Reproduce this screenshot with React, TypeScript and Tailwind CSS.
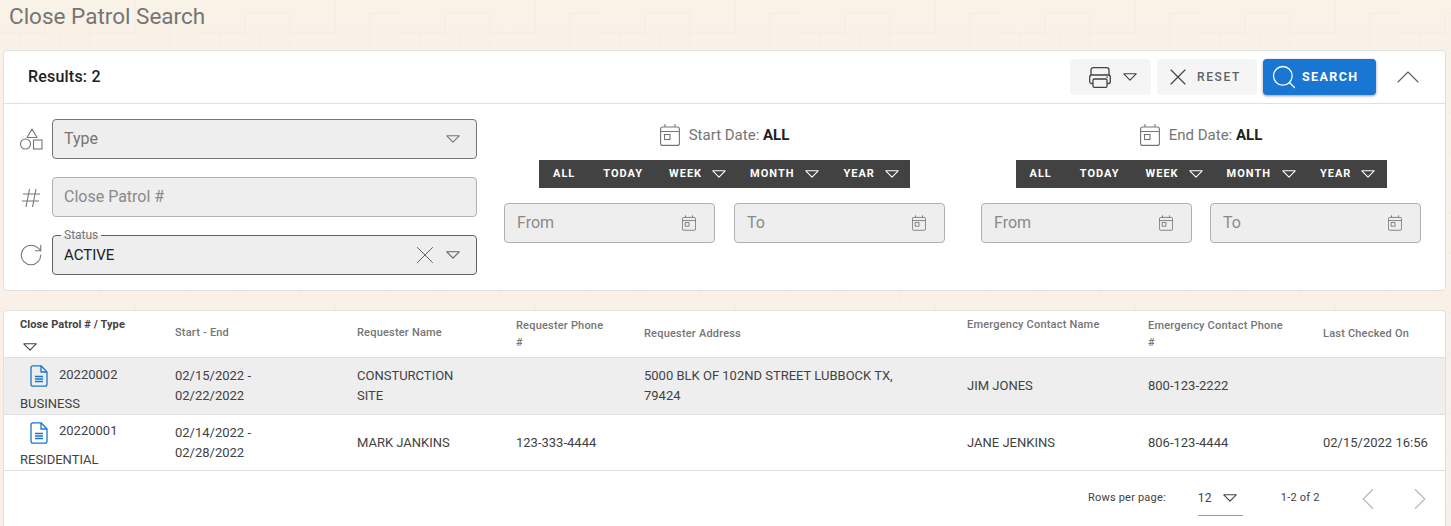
import { X, Search, ChevronUp, ChevronLeft, ChevronRight, RotateCw } from 'lucide-react';

function Caret({ className = '' }: { className?: string }) {
    return (
        <svg width="14" height="8" viewBox="0 0 14 8" fill="none" className={className}>
            <path d="M0.8 0.8H13.2L7 7.2Z" stroke="currentColor" strokeWidth="1.1" strokeLinejoin="round" />
        </svg>
    );
}

function PrinterIcon() {
    return (
        <svg width="22" height="21" viewBox="0 0 22 21" fill="none" stroke="currentColor" strokeWidth="1.3">
            <path d="M2 8V3C2 1.6 3 0.7 4.4 0.7H17.6C19 0.7 20 1.6 20 3V8" />
            <path d="M4 16.5H2.6C1.4 16.5 0.7 15.6 0.7 14.5V10C0.7 8.8 1.6 8 2.8 8H19.2C20.4 8 21.3 8.8 21.3 10V14.5C21.3 15.6 20.6 16.5 19.4 16.5H18" />
            <rect x="4" y="12" width="14" height="8.3" rx="1.2" />
            <path d="M17.5 10.2H19" />
        </svg>
    );
}

function CalendarIcon({ width = 20, height = 22 }: { width?: number; height?: number }) {
    return (
        <svg width={width} height={height} viewBox="0 0 20 22" fill="none" stroke="currentColor" strokeWidth="1.1">
            <rect x="0.6" y="3" width="18.8" height="18.4" rx="2" />
            <path d="M0.6 7.5H19.4M5 0V3M15 0V3" />
            <rect x="4.5" y="10.5" width="5.5" height="5" />
        </svg>
    );
}

function DocIcon() {
    return (
        <svg width="18" height="22" viewBox="0 0 18 22" fill="none" stroke="#1976d2" strokeWidth="1.3" className="shrink-0">
            <path d="M3 0.8H11L17 7V19C17 20.2 16 21.2 14.8 21.2H3.2C2 21.2 1 20.2 1 19V3C1 1.8 1.8 0.8 3 0.8Z" strokeLinejoin="round" />
            <path d="M11 0.8V7H17M5 11.5H13M5 14H13M5 16.5H13" />
        </svg>
    );
}

function ShapesIcon() {
    return (
        <svg width="26" height="26" viewBox="0 0 26 26" fill="none" stroke="currentColor" strokeWidth="1.1" className="shrink-0">
            <path d="M14 3L19 11.5H9Z" strokeLinejoin="round" />
            <circle cx="7.5" cy="18" r="5" />
            <rect x="15.5" y="14" width="8.5" height="9" />
        </svg>
    );
}

function HashIcon() {
    return (
        <svg width="26" height="26" viewBox="0 0 26 26" fill="none" stroke="currentColor" strokeWidth="1.1" className="shrink-0">
            <path d="M11.5 5L8 23M18 5L14.5 23M5 10H22M4 17H21" />
        </svg>
    );
}

function DateBar() {
    return (
        <div className="mx-auto flex h-7 w-[371px] items-center bg-[#424242] text-[11px] font-bold tracking-[1px] text-white">
            <span className="ml-[14px]">ALL</span>
            <span className="ml-[28px]">TODAY</span>
            <span className="ml-[26px]">WEEK</span>
            <Caret className="ml-[10px]" />
            <span className="ml-[24px]">MONTH</span>
            <Caret className="ml-[11px]" />
            <span className="ml-6">YEAR</span>
            <Caret className="ml-[10px]" />
        </div>
    );
}

function DateField({ label }: { label: string }) {
    return (
        <div className="flex h-10 w-[211px] items-center justify-between rounded border border-[#b0b0b0] bg-[#eeeeee] pl-3 pr-[18px] text-base text-[#8a8a8a]">
            <span>{label}</span>
            <span className="text-[#666666]">
                <CalendarIcon width={14} height={16} />
            </span>
        </div>
    );
}

function DateColumn({ title, className }: { title: string; className: string }) {
    return (
        <div className={className}>
            <div className="mb-2 flex h-[34px] items-center justify-center gap-[9px] text-[15px] text-[#757575]">
                <span>
                    <CalendarIcon />
                </span>
                <span>
                    {title}: <b className="font-bold text-[#212121]">ALL</b>
                </span>
            </div>
            <DateBar />
            <div className="mt-[15px] flex justify-between">
                <DateField label="From" />
                <DateField label="To" />
            </div>
        </div>
    );
}

const cols = 'grid grid-cols-[155px_182px_159px_128px_323px_181px_175px_1fr] pl-4';

const rows = [
    {
        num: '20220002',
        type: 'BUSINESS',
        dates: ['02/15/2022 -', '02/22/2022'],
        name: ['CONSTURCTION', 'SITE'],
        phone: '',
        address: ['5000 BLK OF 102ND STREET LUBBOCK TX,', '79424'],
        contact: 'JIM JONES',
        contactPhone: '800-123-2222',
        checked: '',
        className: 'h-[57px] bg-[#eeeeee]',
    },
    {
        num: '20220001',
        type: 'RESIDENTIAL',
        dates: ['02/14/2022 -', '02/28/2022'],
        name: ['MARK JANKINS'],
        phone: '123-333-4444',
        address: [],
        contact: 'JANE JENKINS',
        contactPhone: '806-123-4444',
        checked: '02/15/2022 16:56',
        className: 'h-[56px] bg-white',
    },
];

export default function App() {
    return (
        <div className="relative h-[526px] overflow-hidden bg-gradient-to-b from-[#f9f2e7] to-[#f9efea] font-['Roboto',sans-serif] text-[#424242]">
            <svg className="absolute inset-0" width="1451" height="526">
                <defs>
                    <pattern id="maze" width="200" height="100" patternUnits="userSpaceOnUse">
                        <path
                            d="M0 33H45V13H90V33H135V0M20 33V53H60V33M90 33V53H170V13H200M120 53V73H190V100M0 73H40V100M60 73H100V100"
                            fill="none"
                            stroke="#f4ecdf"
                            strokeWidth="1"
                        />
                    </pattern>
                </defs>
                <rect width="1451" height="526" fill="url(#maze)" />
            </svg>

            <div className="relative pl-[3px] pr-[5px]">
                <h1 className="h-[50px] pl-[6px] text-[22.5px] leading-8 text-[#757575]">Close Patrol Search</h1>

                <section className="h-[241px] rounded border border-[#e0e0e0] bg-white">
                    <div className="flex h-[53px] items-center border-b border-[#e0e0e0] pl-6 pr-[17px]">
                        <span className="text-base font-medium tracking-[0.2px] text-[#212121]">Results: 2</span>
                        <div className="ml-auto flex h-9 items-center gap-[6px]">
                            <button className="flex h-9 w-[81px] items-center gap-3 rounded bg-[#f5f5f5] pl-[19px] text-[#424242]">
                                <PrinterIcon />
                                <Caret />
                            </button>
                            <button className="flex h-9 w-[100px] items-center gap-[5px] rounded bg-[#f5f5f5] pl-[7px] text-xs font-medium tracking-[1.6px] text-[#616161]">
                                <X size={28} strokeWidth={1} className="text-[#424242]" />
                                RESET
                            </button>
                            <button className="flex h-9 w-[113px] items-center gap-[4px] rounded bg-[#1976d2] pl-[7px] text-[12.5px] font-bold tracking-[1.4px] text-white shadow-[0_1px_3px_rgba(0,0,0,0.4)]">
                                <Search size={28} strokeWidth={1.1} />
                                SEARCH
                            </button>
                            <ChevronUp size={40} strokeWidth={0.7} className="ml-[6px] text-[#616161]" />
                        </div>
                    </div>

                    <div className="flex pt-[15px]">
                        <div className="flex w-[473px] shrink-0 flex-col gap-[18px] pl-[14px]">
                            <div className="flex items-center gap-2 text-[#757575]">
                                <ShapesIcon />
                                <div className="flex h-10 flex-1 items-center justify-between rounded border border-[#757575] bg-[#eeeeee] pl-[11px] pr-4 text-base">
                                    <span>Type</span>
                                    <Caret />
                                </div>
                            </div>
                            <div className="flex items-center gap-2 text-[#757575]">
                                <HashIcon />
                                <div className="flex h-10 flex-1 items-center rounded border border-[#b0b0b0] bg-[#eeeeee] pl-[11px] text-base text-[#8a8a8a]">
                                    Close Patrol #
                                </div>
                            </div>
                            <div className="flex items-center gap-2">
                                <RotateCw size={26} strokeWidth={1} className="shrink-0 text-[#757575]" />
                                <div className="relative flex h-10 flex-1 items-center justify-between rounded border border-[#616161] bg-[#eeeeee] pl-[11px] pr-4 text-[#212121]">
                                    <span className="absolute -top-[8px] left-[8px] bg-[linear-gradient(to_bottom,white_50%,#eeeeee_50%)] px-[3px] text-xs leading-[14px] text-[#757575]">
                                        Status
                                    </span>
                                    <span className="text-[15px]">ACTIVE</span>
                                    <div className="flex items-center gap-[6px] text-[#616161]">
                                        <X size={30} strokeWidth={0.8} />
                                        <Caret />
                                    </div>
                                </div>
                            </div>
                        </div>
                        <DateColumn title="Start Date" className="-mt-[1px] ml-[27px] w-[441px] shrink-0" />
                        <DateColumn title="End Date" className="-mt-[1px] ml-9 w-[440px] shrink-0" />
                    </div>
                </section>

                <section className="mt-[19px] h-[300px] rounded border border-[#e0e0e0] bg-white">
                    <div className={`${cols} h-[47px] items-center border-b border-[#e0e0e0] text-[11px] font-medium leading-[17px] tracking-[0.2px] text-[#757575]`}>
                        <div className="-mt-[1px] font-bold tracking-[0.1px] text-[#424242]">
                            <div>Close Patrol # / Type</div>
                            <Caret className="ml-[3px] mt-[10px]" />
                        </div>
                        <div className="-mt-1">Start - End</div>
                        <div className="-mt-1">Requester Name</div>
                        <div className="w-[95px]">Requester Phone #</div>
                        <div className="-mt-[2px]">Requester Address</div>
                        <div className="-mt-[19px]">Emergency Contact Name</div>
                        <div className="w-[140px]">Emergency Contact Phone #</div>
                        <div className="-mt-[2px]">Last Checked On</div>
                    </div>
                    {rows.map((row) => (
                        <div key={row.num} className={`${cols} items-center border-b border-[#e0e0e0] text-[13px] leading-5 text-[#424242] ${row.className}`}>
                            <div>
                                <div className="flex h-[35px] items-center gap-[11px] pl-[10px]">
                                    <DocIcon />
                                    <span className="-mt-[3px]">{row.num}</span>
                                </div>
                                <div>{row.type}</div>
                            </div>
                            <div>
                                {row.dates.map((d) => (
                                    <div key={d}>{d}</div>
                                ))}
                            </div>
                            <div>
                                {row.name.map((d) => (
                                    <div key={d}>{d}</div>
                                ))}
                            </div>
                            <div>{row.phone}</div>
                            <div>
                                {row.address.map((d) => (
                                    <div key={d}>{d}</div>
                                ))}
                            </div>
                            <div>{row.contact}</div>
                            <div>{row.contactPhone}</div>
                            <div className="whitespace-nowrap">{row.checked}</div>
                        </div>
                    ))}
                    <div className="flex h-[55px] items-center text-[11px] tracking-[0.2px] text-[#424242]">
                        <span className="ml-[1084px]">Rows per page:</span>
                        <div className="ml-8 flex h-[34px] w-[45px] items-center gap-[11px] border-b border-[#9e9e9e] text-xs">
                            12
                            <Caret />
                        </div>
                        <span className="ml-[38px]">1-2 of 2</span>
                        <ChevronLeft size={38} strokeWidth={0.7} className="ml-[29px] text-[#b8b8b8]" />
                        <ChevronRight size={38} strokeWidth={0.7} className="ml-[14px] text-[#b8b8b8]" />
                    </div>
                </section>
            </div>
        </div>
    );
}
